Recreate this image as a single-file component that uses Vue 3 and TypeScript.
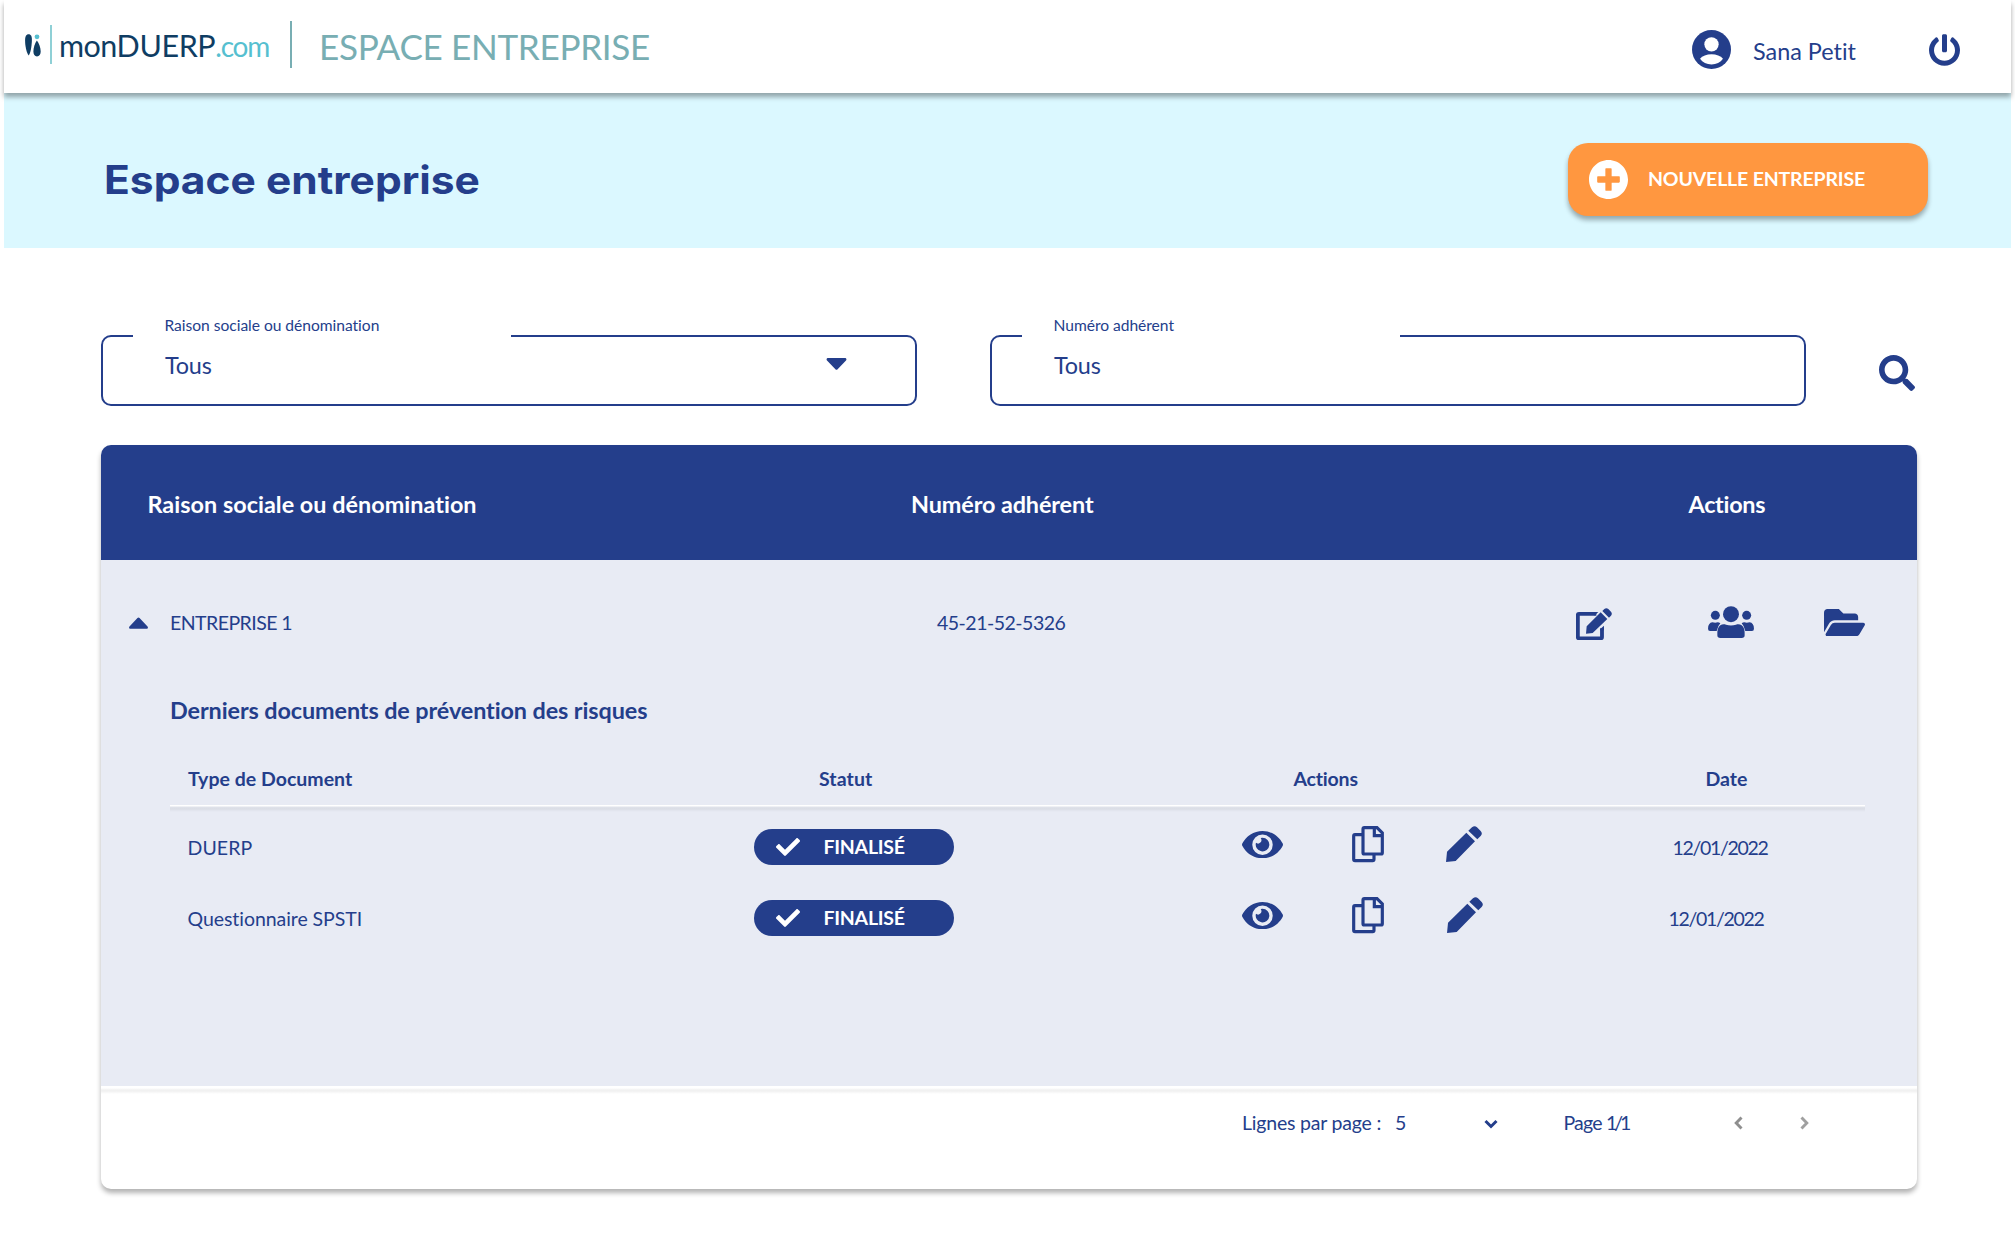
<script setup lang="ts">
interface DocumentRow {
  type: string
  status: string
  date: string
  spacing: string
  variant: string
}

const documents: DocumentRow[] = [
  { type: 'DUERP', status: 'FINALISÉ', date: '12/01/2022', spacing: 'loose', variant: 'first' },
  { type: 'Questionnaire SPSTI', status: 'FINALISÉ', date: '12/01/2022', spacing: 'tight', variant: 'second' },
]
</script>

<template>
  <div class="page">
    <header class="topbar">
      <div class="logo">
        <svg class="logo-mark" viewBox="0 0 16 23" width="16" height="23">
          <path d="M3.6 0.2C6.100 0.200 7 2.400 6.900 6.500c-.2 5.500-1.200 12-3.200 15C1.400 18.500.1 12 .1 6.500.1 2.400 1.100.2 3.600.2z" fill="#0f3d63" />
          <circle cx="12" cy="2.800" r="2.400" fill="#56bfd0" />
          <path d="M11.900 6.600c2 2.600 3.800 7 3.800 11 0 2.900-1.400 4.800-3.700 4.800S8.400 20.500 8.400 17.600c0-4 1.500-8.400 3.500-11z" fill="#0f3d63" />
        </svg>
        <span class="logo-rule"></span>
        <span class="logo-text"><span class="mon">mon</span><span class="duerp">DUERP</span><span class="com">.com</span></span>
      </div>
      <span class="divider"></span>
      <span class="area">ESPACE ENTREPRISE</span>
      <div class="user">
        <svg class="avatar" viewBox="0 0 117 117" width="39" height="39">
          <circle cx="58.500" cy="58.500" r="58.500" fill="#243e8b" />
          <circle cx="58.500" cy="43" r="21.500" fill="#fff" />
          <path d="M24 86.500C31 77.500 44 73 58.500 73S86 77.500 93 86.500C85 97.500 73 103.500 58.500 103.500S32 97.500 24 86.500z" fill="#fff" />
        </svg>
        <span class="user-name">Sana Petit</span>
        <svg class="power" viewBox="8 0 496 504" width="31" height="32">
          <path fill="currentColor" d="M400 54.1c63 45 104 118.6 104 201.9 0 136.8-110.8 247.7-247.5 248C120 504.3 8.2 393 8 256.4 7.9 173.1 48.9 99.3 111.8 54.2c11.7-8.3 28-4.8 35 7.7L162.6 90c5.9 10.5 3.1 23.8-6.6 31-41.5 30.8-68 79.6-68 134.900-.1 92.300 74.500 168.100 168 168.100 91.600 0 168.600-74.200 168-169.100-.3-51.800-24.700-101.800-68.100-134-9.700-7.200-12.400-20.500-6.500-30.900l15.800-28.100c7-12.400 23.200-16.100 34.800-7.800zM296 264V24c0-13.300-10.700-24-24-24h-32c-13.300 0-24 10.700-24 24v240c0 13.300 10.700 24 24 24h32c13.300 0 24-10.700 24-24z" />
        </svg>
      </div>
    </header>

    <section class="band">
      <h1>Espace entreprise</h1>
      <button class="new-btn" type="button">
        <svg viewBox="8 8 496 496" width="39" height="39">
          <path fill="currentColor" d="M256 8C119 8 8 119 8 256s111 248 248 248 248-111 248-248S393 8 256 8zm144 276c0 6.600-5.400 12-12 12h-92v92c0 6.600-5.400 12-12 12h-56c-6.600 0-12-5.400-12-12v-92h-92c-6.600 0-12-5.400-12-12v-56c0-6.600 5.400-12 12-12h92v-92c0-6.600 5.400-12 12-12h56c6.600 0 12 5.400 12 12v92h92c6.600 0 12 5.400 12 12v56z" />
        </svg>
        <span>NOUVELLE ENTREPRISE</span>
      </button>
    </section>

    <section class="filters">
      <div class="field">
        <label>Raison sociale ou dénomination</label>
        <span class="value">Tous</span>
        <svg class="select-caret" viewBox="0 0 20 12" width="21" height="12">
          <path fill="currentColor" d="M1.500 0h17c1.300 0 1.900 1.500 1 2.400l-8.400 8.800a1.500 1.500 0 0 1-2.200 0L.5 2.400C-.4 1.500.2 0 1.500 0z" />
        </svg>
      </div>
      <div class="field">
        <label>Numéro adhérent</label>
        <span class="value">Tous</span>
      </div>
      <svg class="search" viewBox="0 0 512 512" width="36" height="36">
        <path fill="currentColor" d="M505 442.700L405.300 343c-4.500-4.500-10.600-7-17-7H372c27.600-35.300 44-79.700 44-128C416 93.100 322.900 0 208 0S0 93.100 0 208s93.100 208 208 208c48.300 0 92.700-16.400 128-44v16.300c0 6.400 2.500 12.500 7 17l99.700 99.700c9.400 9.400 24.600 9.400 33.900 0l28.300-28.300c9.400-9.400 9.400-24.600.1-34zM208 336c-70.700 0-128-57.200-128-128 0-70.700 57.200-128 128-128 70.700 0 128 57.200 128 128 0 70.700-57.200 128-128 128z" />
      </svg>
    </section>

    <main class="card">
      <div class="card-head">
        <span class="h-name">Raison sociale ou dénomination</span>
        <span class="h-num">Numéro adhérent</span>
        <span class="h-act">Actions</span>
      </div>

      <div class="card-body">
        <div class="company">
          <svg class="collapse" viewBox="0 0 20 12" width="19" height="12">
            <path fill="currentColor" d="M1.500 12h17c1.300 0 1.900-1.500 1-2.400L11.100.8a1.500 1.500 0 0 0-2.200 0L.5 9.600C-.4 10.500.2 12 1.500 12z" />
          </svg>
          <span class="company-name">ENTREPRISE 1</span>
          <span class="company-num">45-21-52-5326</span>
          <svg class="edit" viewBox="0 0 108 97" width="36" height="32.300">
            <path d="M61 17.500H8.500a3 3 0 0 0-3 3V88a3 3 0 0 0 3 3H75a3 3 0 0 0 3-3V61" fill="none" stroke="currentColor" stroke-width="11.500" />
            <path fill="currentColor" d="M55 12h12L55.500 23.500zM72 67V64L84 53V67zM30 77l2-22L74 13l20 20L50 75zM79 9l6-6q6-5 12 0l8 8q5 6 0 12l-6 6z" />
          </svg>
          <svg class="people" viewBox="0 0 138 97" width="46" height="32.300">
            <g fill="currentColor">
              <circle cx="69" cy="24.500" r="24" />
              <circle cx="22" cy="28" r="13.500" />
              <circle cx="116" cy="28" r="13.500" />
              <path d="M28 88c-1-15 2-25 9-30 5-4 12-4 17-2q15 5 30 0c5-2 12-2 17 2 7 5 10 15 9 30q0 8-9 8H37q-9 0-9-8z" />
              <path d="M6 75q-6 0-6-7c0-11 5-18 13-19q9 2 16 0 4 0 8 3-8 8-11 23zM132 75q6 0 6-7c0-11-5-18-13-19q-9 2-16 0-4 0-8 3 8 8 11 23z" />
            </g>
          </svg>
          <svg class="folder" viewBox="0 64 576 384" width="41" height="27.300">
            <path fill="currentColor" d="M572.694 292.093L500.270 416.248A63.997 63.997 0 0 1 444.989 448H45.025c-18.523 0-30.064-20.093-20.731-36.093l72.424-124.155A64 64 0 0 1 152 256h399.964c18.523 0 30.064 20.093 20.730 36.093zM152 224h328v-48c0-26.510-21.490-48-48-48H272l-64-64H48C21.490 64 0 85.490 0 112v278.046l69.077-118.418C86.214 242.250 117.989 224 152 224z" />
          </svg>
        </div>

        <h2>Derniers documents de prévention des risques</h2>

        <div class="docs">
          <div class="docs-head">
            <span class="d-type">Type de Document</span>
            <span class="d-status">Statut</span>
            <span class="d-act">Actions</span>
            <span class="d-date">Date</span>
          </div>
          <div class="docs-rule"></div>
          <div v-for="doc in documents" :key="doc.type" class="docs-row" :class="doc.variant">
            <span :class="doc.spacing">{{ doc.type }}</span>
            <span class="pill">
              <svg viewBox="0 65 512 382" width="24" height="18">
                <path fill="currentColor" d="M173.898 439.404l-166.400-166.400c-9.997-9.997-9.997-26.206 0-36.204l36.203-36.204c9.997-9.998 26.207-9.998 36.204 0L192 312.690 432.095 72.596c9.997-9.997 26.207-9.997 36.204 0l36.203 36.204c9.997 9.997 9.997 26.206 0 36.204l-294.400 294.401c-9.998 9.997-26.207 9.997-36.204-.001z" />
              </svg>
              <span>{{ doc.status }}</span>
            </span>
            <span class="doc-actions">
              <svg viewBox="0 64 576 384" width="41" height="27.300">
                <path fill="currentColor" d="M572.520 241.400C518.290 135.590 410.930 64 288 64S57.680 135.640 3.480 241.410a32.350 32.350 0 0 0 0 29.190C57.710 376.410 165.070 448 288 448s230.320-71.640 284.520-177.410a32.350 32.350 0 0 0 0-29.190zM288 400a144 144 0 1 1 144-144 143.930 143.930 0 0 1-144 144zm0-240a95.310 95.310 0 0 0-25.310 3.790 47.850 47.850 0 0 1-66.900 66.900A95.780 95.780 0 1 0 288 160z" />
              </svg>
              <svg class="copy" viewBox="0 0 96 109" width="32" height="36.300">
                <g fill="none" stroke="currentColor" stroke-width="9.500">
                  <path d="M31 26H9a4 4 0 0 0-4 4v70a4 4 0 0 0 4 4h53a4 4 0 0 0 4-4V87" />
                  <path d="M37 5h38l16 16v59a4 4 0 0 1-4 4H37a4 4 0 0 1-4-4V9a4 4 0 0 1 4-4z" />
                  <path d="M67 5v24h24" />
                </g>
              </svg>
              <svg class="pencil" viewBox="0 0 108 109" width="36" height="36.300">
                <path fill="currentColor" d="M0 108l3-31L61 20l26 26L29 105zM67 14L78 4q8-7 15 0l11 11q7 7 0 15L94 40z" />
              </svg>
            </span>
            <span class="date">{{ doc.date }}</span>
          </div>
        </div>
      </div>

      <footer class="card-foot">
        <span class="per-page">Lignes par page :</span>
        <span class="count">5</span>
        <svg class="chevron-down" viewBox="0 0 14 10" width="14" height="10">
          <path d="M1.500 2L7 7.500 12.500 2" fill="none" stroke="currentColor" stroke-width="3" />
        </svg>
        <span class="page-label">Page <span class="page-num">1/1</span></span>
        <svg class="arrow prev" viewBox="0 0 9 14" width="9" height="14">
          <path d="M7.500 1.500L2.200 7l5.300 5.500" fill="none" stroke="currentColor" stroke-width="2.900" />
        </svg>
        <svg class="arrow next" viewBox="0 0 9 14" width="9" height="14">
          <path d="M1.500 1.500L6.800 7l-5.300 5.500" fill="none" stroke="currentColor" stroke-width="2.900" />
        </svg>
      </footer>
    </main>
  </div>
</template>

<style>
body { background: #fff; }
</style>

<style scoped>
* { box-sizing: border-box; }
svg { display: block; flex: none; }
.page {
  width: 2015px;
  height: 1258px;
  padding: 0 4px;
  overflow: hidden;
  background: #fff;
  color: #243e8b;
  font-family: Lato, 'Liberation Sans', sans-serif;
  font-size: 19.5px;
  line-height: 24px;
  font-variant-ligatures: none;
  white-space: nowrap;
}

.topbar {
  position: relative;
  display: flex;
  height: 93px;
  background: #fff;
  box-shadow: 0 4px 5px rgba(0, 0, 0, 0.34);
}
.logo { display: flex; width: 286px; }
.logo-mark { margin: 34px 0 0 21px; }
.logo-rule { width: 1.5px; height: 39px; margin: 25px 0 0 9px; background: #8fd0d6; }
.logo-text { margin: 26px 0 0 7.5px; font-size: 30.5px; line-height: 38px; }
.mon, .duerp { color: #0f3d63; }
.mon { letter-spacing: -0.6px; }
.duerp { letter-spacing: -0.4px; }
.com { font-size: 28px; letter-spacing: -1.2px; color: #56bfd0; }
.divider { width: 2px; height: 47px; margin-top: 21px; background: #78aeb3; }
.area { margin: 26px 0 0 27px; font-size: 35.1px; line-height: 40px; letter-spacing: -0.33px; color: #78aeb3; }
.user { display: flex; width: 323px; margin-left: auto; }
.avatar { margin: 30px 0 0 4px; }
.user-name { margin: 39px 0 0 22px; width: 176px; font-size: 23.4px; }
.power { margin-top: 34px; }

.band {
  display: flex;
  align-items: center;
  justify-content: space-between;
  height: 155px;
  padding: 18px 83px 0 99.5px;
  background: #dbf8ff;
}
h1 {
  margin: 0;
  font: 700 39px/48px Inter, sans-serif;
  transform: scaleX(1.09);
  transform-origin: left center;
}
.new-btn {
  display: flex;
  align-items: center;
  width: 360px;
  height: 73px;
  padding: 0 0 0 21px;
  border: 0;
  border-radius: 20px;
  background: #ff9740;
  box-shadow: 0 4px 5px rgba(0, 0, 0, 0.32);
  color: #fff;
  font: 700 19.5px/24px Lato, sans-serif;
  letter-spacing: -0.17px;
}
.new-btn span { margin: 0 0 1px 20px; }

.filters { display: flex; margin: 87px 0 0 97px; height: 71px; }
.field {
  position: relative;
  display: flex;
  width: 816px;
  height: 71px;
  margin-right: 73px;
  border: 2px solid #243e8b;
  border-radius: 10px;
}
.field label {
  position: absolute;
  left: 30px;
  top: -22px;
  width: 378px;
  height: 26px;
  padding-left: 31.5px;
  background: #fff;
  font-size: 15.6px;
  line-height: 20px;
  letter-spacing: -0.03px;
}
.value { width: 662px; padding: 16px 0 0 62px; font-size: 23.4px; letter-spacing: -0.2px; }
.select-caret { margin: 21px 0 0 61px; }
.search { margin-top: 20px; }

.card {
  width: 1816px;
  height: 744px;
  margin: 39px 0 0 97px;
  border-radius: 10px;
  background: #fff;
  box-shadow: 0 4px 5px rgba(0, 0, 0, 0.3);
  overflow: hidden;
}
.card-head {
  display: grid;
  grid-template-columns: 763.5px 777.5px 1fr;
  align-items: center;
  height: 115px;
  padding: 3px 0 0 46.5px;
  background: #243e8b;
  color: #fff;
  font-size: 23.4px;
  font-weight: 700;
}
.h-name { letter-spacing: 0.02px; }
.h-num { letter-spacing: -0.1px; }
.h-act { letter-spacing: -0.3px; }

.card-body { height: 526px; background: #e8ebf4; }
.company { display: flex; align-items: center; height: 125px; padding-left: 27.5px; }
.company-name { width: 767px; margin-left: 22.5px; letter-spacing: -0.55px; }
.company-num { width: 638px; letter-spacing: -0.5px; }
.edit { margin: 3px 0 0 1px; }
.people { margin-left: 96px; }
.folder { margin-left: 70px; }
h2 { margin: 0 0 0 69px; font-size: 23.4px; font-weight: 700; line-height: 50px; letter-spacing: -0.1px; }

.docs { margin: 0 52px 0 69px; }
.docs-head {
  display: grid;
  grid-template-columns: 631px 474.5px 412px 1fr;
  align-items: center;
  height: 70px;
  padding: 17px 0 0 18px;
  font-weight: 700;
}
.docs-rule { height: 7px; background: linear-gradient(#fff 0, #fff 1px, #dfe2ea 2px, #dadde5 4px, #e0e3ec 5px, #e8ebf4 7px); }
.d-type { letter-spacing: 0.02px; }
.d-status { letter-spacing: 0.1px; }
.d-act { letter-spacing: -0.2px; }
.docs-row {
  display: grid;
  grid-template-columns: 566.5px 488px 430.5px 1fr;
  align-items: center;
  height: 71px;
  padding-left: 17.5px;
}
.loose { letter-spacing: 0.1px; }
.tight { letter-spacing: -0.06px; }
.pill {
  display: flex;
  align-items: center;
  width: 200px;
  height: 36px;
  margin-bottom: 1px;
  padding-left: 22px;
  border-radius: 18px;
  background: #243e8b;
  color: #fff;
  font-weight: 700;
  letter-spacing: -0.25px;
}
.pill span { margin-left: 23.5px; }
.doc-actions { display: flex; align-items: center; margin-bottom: 6px; }
.copy { margin-left: 69px; }
.pencil { margin-left: 62px; }
.second .pencil { margin-left: 63px; }
.date { letter-spacing: -1.3px; }
.second .date { margin-left: -4px; }

.card-foot {
  display: flex;
  align-items: center;
  height: 73px;
  padding-left: 1141px;
  background: linear-gradient(#fff 0, #fff 2px, #f1f1f1 4px, #f1f1f1 5px, #fff 8px);
}
.per-page { width: 153px; letter-spacing: -0.2px; }
.count { width: 89px; }
.chevron-down { margin-top: 2px; }
.page-label { width: 170px; margin-left: 65.5px; letter-spacing: -0.8px; }
.page-num { letter-spacing: -3px; }
.arrow { color: #8f8f8f; }
.next { margin-left: 57.5px; color: #a0a0a0; }
</style>
